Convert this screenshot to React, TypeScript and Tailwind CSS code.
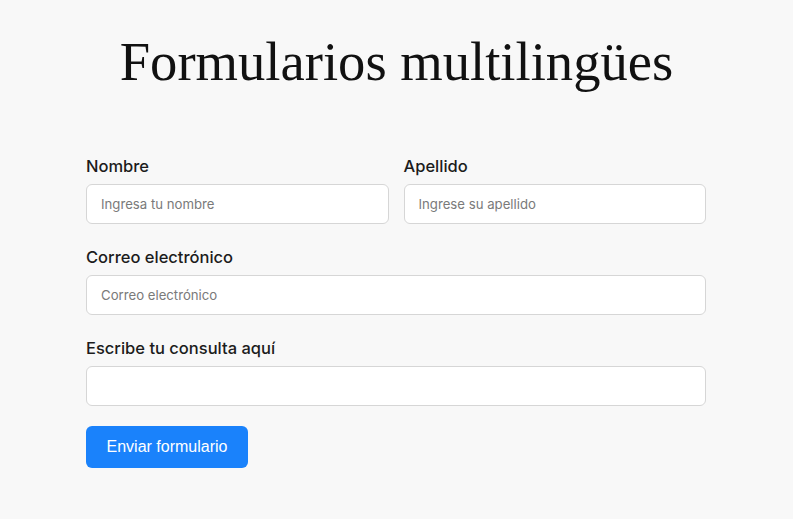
import React from "react";

const inter = { fontFamily: "Inter, 'Noto Sans', sans-serif" };

function Field({ label, placeholder }: { label: string; placeholder?: string }) {
  return (
    <div className="flex flex-col">
      <label className="mb-1.5 text-[16.5px] leading-6 font-medium text-[#1c1c1c]">{label}</label>
      <input
        className="h-10 w-full rounded-md border border-[#d6d6d6] bg-white px-[14px] text-[13.2px] text-[#333] placeholder:text-[#7a7a7a] outline-none"
        placeholder={placeholder}
      />
    </div>
  );
}

export default function App() {
  return (
    <div className="min-h-[519px] w-full bg-[#f8f8f8]" style={inter}>
      <h1
        className="pt-[27px] text-center text-[54.6px] leading-[70px] text-[#111]"
        style={{ fontFamily: "'Liberation Serif', 'DejaVu Serif', serif" }}
      >
        Formularios multilingües
      </h1>
      <form className="ml-[86px] mt-[57px] flex w-[620px] flex-col gap-[21px]" onSubmit={(e) => e.preventDefault()}>
        <div className="grid grid-cols-2 gap-[15px]">
          <Field label="Nombre" placeholder="Ingresa tu nombre" />
          <Field label="Apellido" placeholder="Ingrese su apellido" />
        </div>
        <Field label="Correo electrónico" placeholder="Correo electrónico" />
        <Field label="Escribe tu consulta aquí" />
        <div className="-mt-px">
          <button
            type="submit"
            className="h-[42px] w-[162px] rounded-md bg-[#1a82fb] text-[16px] font-normal text-white"
            style={{ fontFamily: "'Liberation Sans', Arial, sans-serif" }}
          >
            Enviar formulario
          </button>
        </div>
      </form>
    </div>
  );
}
